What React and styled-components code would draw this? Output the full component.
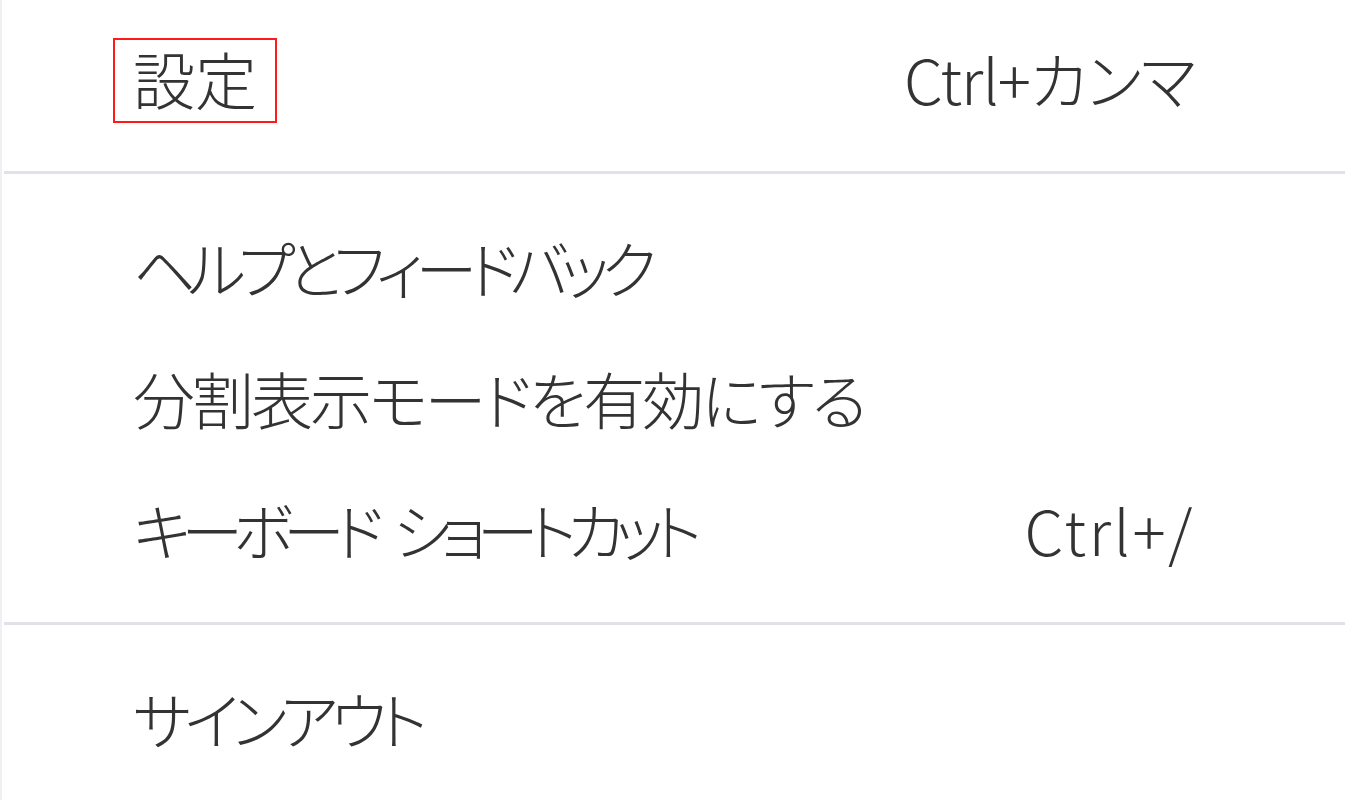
import styled, { createGlobalStyle } from "styled-components";

const GlobalStyle = createGlobalStyle`
  html, body {
    margin: 0;
    padding: 0;
    background: #ffffff;
  }
`;

const Menu = styled.div`
  width: 1345px;
  height: 800px;
  box-sizing: border-box;
  padding-top: 12px;
  border-left: 2px solid #f0f0f2;
  background: #ffffff;
  color: #333333;
  font-family: "Noto Sans CJK JP", "Noto Sans", sans-serif;
  font-feature-settings: "palt";
  font-weight: 300;
  font-size: 62px;
  overflow: hidden;
`;

const Item = styled.div`
  display: flex;
  align-items: center;
  justify-content: space-between;
  height: 131px;
  padding: 0 150px 0 131px;
`;

const Label = styled.span`
  display: inline-block;
  line-height: 1;
  letter-spacing: ${({ $tight }) => $tight || 0}px;
  word-spacing: 14px;
  ${({ $marked }) =>
    $marked &&
    `
    border: 2px solid #ff1a1a;
    padding: 7px 18px 12px;
    margin: -9px -20px -14px;
  `}
`;

const Shortcut = styled.span`
  line-height: 1;
  letter-spacing: ${({ $tight }) => $tight || 0}px;
`;

const Divider = styled.hr`
  margin: 28px 0 27px 2px;
  border: 0;
  height: 3px;
  background: #e1e1e7;
`;

const items = [
  [{ label: "設定", shortcut: "Ctrl+カンマ", marked: true, keyTight: -1 }],
  [
    { label: "ヘルプとフィードバック", tight: -8 },
    { label: "分割表示モードを有効にする", tight: -3 },
    { label: "キーボード ショートカット", tight: -9.5, shortcut: "Ctrl+/", keyTight: 2.5 },
  ],
  [{ label: "サインアウト", tight: -7 }],
];

export default function App() {
  return (
    <>
      <GlobalStyle />
      <Menu>
        {items.map((group, gi) => (
          <div key={gi}>
            {gi > 0 && <Divider />}
            {group.map((it) => (
              <Item key={it.label}>
                <Label $marked={it.marked} $tight={it.tight}>
                  {it.label}
                </Label>
                {it.shortcut && (
                  <Shortcut $tight={it.keyTight}>{it.shortcut}</Shortcut>
                )}
              </Item>
            ))}
          </div>
        ))}
      </Menu>
    </>
  );
}
